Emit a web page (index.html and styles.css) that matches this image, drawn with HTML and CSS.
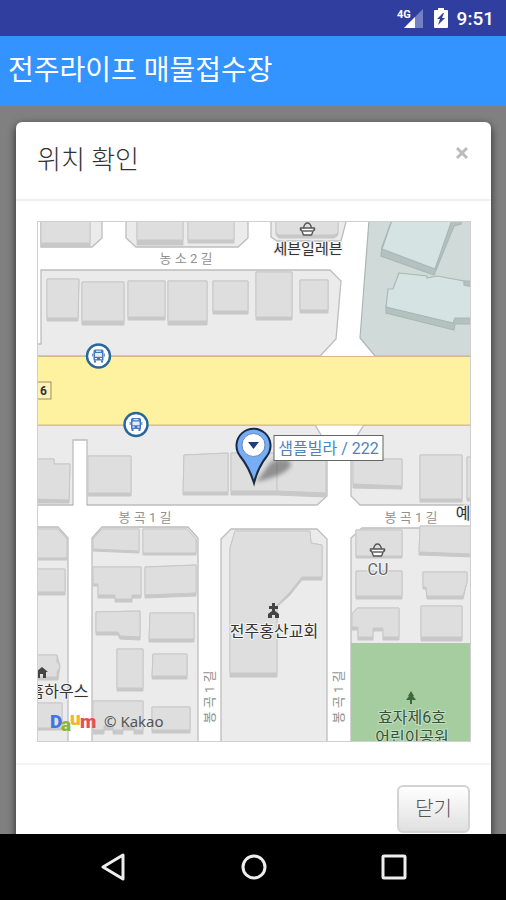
FILE: index.html
```html
<!DOCTYPE html>
<html lang="ko">
<head>
<meta charset="utf-8">
<meta name="viewport" content="width=device-width, initial-scale=1">
<title>전주라이프 매물접수장</title>
<link rel="stylesheet" href="styles.css">
</head>
<body>
<div class="status-bar">
  <svg class="signal" width="28" height="24" viewBox="0 0 28 24" aria-hidden="true">
    <path d="M26 3V22H7Z" fill="#7480c4"/>
    <path d="M18 11V22H7Z" fill="#fff"/>
    <text x="0" y="12" class="network">4G</text>
  </svg>
  <svg class="battery" width="16" height="24" viewBox="0 0 16 24" aria-hidden="true">
    <path d="M5 2H11V4H14Q15 4 15 5V21Q15 22 14 22H2Q1 22 1 21V5Q1 4 2 4H5Z" fill="#fff"/>
    <path d="M10 7 4 13H7L5 19L12 12H9L11 7Z" fill="#303f9f"/>
  </svg>
  <span class="clock">9:51</span>
</div>
<header class="app-bar"><h1>전주라이프 매물접수장</h1></header>
<main class="backdrop">
  <section class="modal" role="dialog" aria-labelledby="modal-title">
    <div class="modal-header">
      <h2 id="modal-title">위치 확인</h2>
      <button class="close" type="button" aria-label="닫기">
        <svg width="14" height="14" viewBox="0 0 14 14"><path d="M2 2 12 12M12 2 2 12"/></svg>
      </button>
    </div>
    <div class="modal-body">
      <svg class="map" viewBox="38 222 432 519" role="img" aria-label="지도">
        <defs>
          <g id="bus">
            <circle r="11.5" fill="#fff" stroke="#27699b" stroke-width="2.4"/>
            <path d="M-3.500-6.500H3.500Q5-6.500 5-5V4.500H-5V-5Q-5-6.500-3.500-6.500Z" fill="#4878b8"/>
            <path d="M-2.500-4.800H2.500" stroke="#fff" stroke-width="1"/>
            <path d="M-3.500-3H3.500V.8H-3.500Z" fill="#e4edf6"/>
            <path d="M-3.500 4.500V6.500M3.500 4.500V6.500" stroke="#4878b8" stroke-width="2"/>
            <path d="M-5.800-2.500V.5M5.800-2.500V.5" stroke="#4878b8" stroke-width="1"/>
            <path d="M-3.500 2.700H-1.500M1.500 2.700H3.500" stroke="#fff" stroke-width="1.2"/>
          </g>
          <g id="basket" fill="#fff" stroke="#555" stroke-width="1.4" stroke-linejoin="round">
            <path d="M-4-1Q-3-6 0-6T4-1" fill="none"/>
            <path d="M-7-1H7V1H6L4 6H-4L-6 1H-7Z"/>
            <path d="M-5 2H5" fill="none"/>
          </g>
          <filter id="soft" x="-30%" y="-30%" width="160%" height="160%"><feGaussianBlur stdDeviation="2"/></filter>
        </defs>
        <rect x="38" y="222" width="432" height="519" fill="#fff"/>

        <g class="block">
          <path d="M41 220H102V238L92 247H41Z"/>
          <path d="M126 220V238L136 247H238L248 238V220Z"/>
          <path d="M271 220V237L277 241H341L346 222V220Z"/>
          <path d="M41 270H330L341 281L336 339L320 356H36V344H41Z"/>
          <path d="M36 425H315L327 445V496L317 505H87V440H73V505H36Z"/>
          <path d="M364 425H472V505H360L351 496V445Z"/>
          <path d="M36 527H58L68 538V743H36Z"/>
          <path d="M92 743V538L102 527H188L198 538V743Z"/>
          <path d="M221 743V539L231 529H317L327 539V743Z"/>
          <path d="M351 743V538L362 528H465L472 534V743Z"/>
        </g>

        <g class="shade">
          <path d="M41 220H90V246H41Z"/><path d="M137 220H183V245H137Z"/><path d="M188 220H234V243H188Z"/><path d="M276 220H338V235L334 238H279L276 235Z"/>
          <path d="M47 279H79L78 321H47Z"/><path d="M82 282H124V325H82Z"/><path d="M128 281H165V320H128Z"/><path d="M168 281H207V325H168Z"/><path d="M213 281H248V314H213Z"/><path d="M256 272H292V320H256Z"/><path d="M300 280H328V313H300Z"/>
          <path d="M36 459H54V464H70L69 503H36Z"/><path d="M88 456H131V496H88Z"/><path d="M184 455 228 453V495H183Z"/><path d="M231 453H277V495H231Z"/><path d="M277 453H326V497L277 495Z"/>
          <path d="M353 459H402V489L353 488Z"/><path d="M420 455H462V502H420Z"/><path d="M467 457H472V501H467Z"/>
          <path d="M36 529H58L67 539V560H36Z"/><path d="M36 569H65V595H36Z"/><path d="M36 655H57L60 666L58 680H36Z"/><path d="M36 703H62V730H36Z"/>
          <path d="M93 539 102 529H139V553L93 551Z"/><path d="M143 529H187L196 539V555H143Z"/>
          <path d="M93 567H141V598H132V602H115V598H98V586H93Z"/><path d="M145 567 196 565V596L145 598Z"/>
          <path d="M96 612 140 611V640L120 639L118 635H96Z"/><path d="M150 613H194V642H149Z"/>
          <path d="M117 649H143V691H117Z"/><path d="M153 654H187V679H152Z"/>
          <path d="M93 701H143V734H134V730H123V734H113V730H104V734H93Z"/><path d="M152 707H190V733H152Z"/>
          <path d="M230 677V548L235 531H310L311 543L322 545V580H302L290 595L277 607V677Z"/>
          <path d="M356 530H402V558H356Z"/><path d="M420 526H472V557L419 555Z"/><path d="M356 571H402V599H356Z"/><path d="M423 572H467V582L463 599H427L426 589H423Z"/>
          <path d="M352 614 357 608H399V640H383V631H373V640H358V630H352Z"/><path d="M421 606H462V641H421Z"/>
        </g>
        <g class="building">
          <path d="M41 220H90V243H41Z"/><path d="M137 220H183V240H137Z"/><path d="M188 220H234V240H188Z"/><path d="M276 220H338V233L334 235H279L276 233Z"/>
          <path d="M47 279H79L78 318H47Z"/><path d="M82 282H124V321H82Z"/><path d="M128 281H165V317H128Z"/><path d="M168 281H207V321H168Z"/><path d="M213 281H248V311H213Z"/><path d="M256 272H292V317H256Z"/><path d="M300 280H328V310H300Z"/>
          <path d="M36 459H54V464H70L69 500L36 499Z"/><path d="M88 456H131V493H88Z"/><path d="M184 455 228 453V492H183Z"/><path d="M231 453H277V491H231Z"/><path d="M277 453H326V493L277 491Z"/>
          <path d="M353 459H402V486L353 484Z"/><path d="M420 455H462V499H420Z"/><path d="M467 457H472V498H467Z"/>
          <path d="M36 529H58L67 539V558H36Z"/><path d="M36 569H65V592H36Z"/><path d="M36 655H57V662L60 666L57 672V677H36Z"/><path d="M36 703H62V728H36Z"/>
          <path d="M93 539 102 529H139V551L93 549Z"/><path d="M143 529H187L196 539V553H143Z"/>
          <path d="M93 567H141V595H132V599H115V595H98V584H93Z"/><path d="M145 567 196 565V593L145 595Z"/>
          <path d="M96 612 140 611V637L120 636L118 632H96Z"/><path d="M150 613H194V639H149Z"/>
          <path d="M117 649H143V688H117Z"/><path d="M153 654H187V676H152Z"/>
          <path d="M93 701H143V730H134V726H123V730H113V726H104V730H93Z"/><path d="M152 707H190V730H152Z"/>
          <path d="M230 673V548L235 531H310L311 543L322 545V577H302L290 592L277 605V673Z"/>
          <path d="M356 530H402V556H356Z"/><path d="M420 526H472V554L419 552Z"/><path d="M356 571H402V596H356Z"/><path d="M423 572H467V582L463 596H427L426 587H423Z"/>
          <path d="M352 614 357 608H399V637H383V628H373V637H358V627H352Z"/><path d="M421 606H462V637H421Z"/>
        </g>

        <g stroke="#a9b8b5" stroke-width="1.2">
          <path d="M369 220H472V356H375L360 338Z" fill="#d0dad8"/>
          <path d="M382 247 381 256 434 275 454 226 461 224V220H392Z" fill="#b3c2bf"/>
          <path d="M392 220H452L435 269L382 249Z" fill="#d5e3e2"/>
          <path d="M386 307V313L454 330L455 324H472V281H399Z" fill="#b3c2bf"/>
          <path d="M399 273 427 276V278L437 276L464 281V285L472 287V318H455L453 323L386 307L388 289H393Z" fill="#d5e3e2"/>
        </g>
        <path d="M36 356.500H472V425H36Z" fill="#fef2a0" stroke="#d9b885" stroke-width="1"/>
        <path d="M351 643H472V743H351Z" fill="#a5cd9f"/>

        <rect x="30" y="382" width="21" height="17" fill="#fbf1b9" stroke="#99905d"/>
        <text class="road-number" x="40" y="395">6</text>
        <use href="#bus" x="98.500" y="356"/>
        <use href="#bus" x="136" y="424.500"/>

        <g class="road" text-anchor="middle">
          <text x="186" y="263">농 소 2 길</text>
          <text x="145" y="522">봉 곡 1 길</text>
          <text x="411" y="522">봉 곡 1 길</text>
          <text transform="translate(214 697) rotate(-90)">봉 곡 1 길</text>
          <text transform="translate(343 697) rotate(-90)">봉 곡 1 길</text>
        </g>

        <use href="#basket" x="307.500" y="229"/>
        <use href="#basket" x="377.500" y="550"/>
        <g fill="#444">
          <path d="M272 603H275V606H278V609H275V611L279 614V618H275V615H272V618H268V614L272 611V609H269V606H272Z"/>
          <path d="M411 691 414 696H413L416 700H412V704H410V700H406L409 696H408Z" fill="#3c6940"/>
          <path d="M36 672 42 667 48 672H46V678H43V674H40V678H36Z"/>
        </g>
        <g class="place" text-anchor="middle">
          <text x="308" y="254" class="shop">세븐일레븐</text>
          <text x="274" y="637">전주홍산교회</text>
          <text x="378" y="575" class="store">CU</text>
          <text x="412" y="723" class="park">효자제6호</text>
          <text x="412" y="743" class="park">어린이공원</text>
          <text x="463" y="519">예</text>
          <text x="59" y="697">홈하우스</text>
        </g>

        <path d="M256 482 271 462Q290 455 291 465Q287 475 256 482Z" fill="#333" opacity=".45" filter="url(#soft)"/>
        <path d="M254 483Q249 467 240 456A17 17 0 1 1 267 456Q258 467 254 483Z" fill="#77adf5" stroke="#182b44" stroke-width="2"/>
        <circle cx="253.500" cy="445" r="11.500" fill="#fff" stroke="#6686b9"/>
        <path d="M248 442H259L253.500 449Z" fill="#1e3f7c"/>
        <rect x="274" y="435.500" width="109" height="25" fill="#fff" stroke="#666"/>
        <text class="label" x="328.500" y="454" text-anchor="middle">샘플빌라 / 222</text>

        <g class="daum">
          <text x="50" y="728" fill="#4372e4">D</text>
          <text x="61" y="731" fill="#8cb82b">a</text>
          <text x="70" y="725" fill="#f4b51e">u</text>
          <text x="80" y="728" fill="#e94e50">m</text>
        </g>
        <text class="copyright" x="104" y="727">© Kakao</text>
      </svg>
    </div>
    <div class="modal-footer"><button class="dismiss" type="button">닫기</button></div>
  </section>
</main>
<nav class="nav-bar">
  <button type="button" aria-label="뒤로"><svg width="28" height="28" viewBox="0 0 28 28"><path d="M23 2V26L3 14Z"/></svg></button>
  <button type="button" aria-label="홈"><svg width="28" height="28" viewBox="0 0 28 28"><circle cx="14" cy="14" r="11"/></svg></button>
  <button type="button" aria-label="최근 앱"><svg width="28" height="28" viewBox="0 0 28 28"><rect x="3" y="3" width="22" height="22" rx="1"/></svg></button>
</nav>
</body>
</html>
```
FILE: styles.css
```css
* { box-sizing: border-box; }

body {
  margin: 0;
  height: 100vh;
  display: flex;
  flex-direction: column;
  overflow: hidden;
  font-family: Roboto, "Noto Sans CJK KR", sans-serif;
  color: #333;
}

h1, h2 { margin: 0; }

button { font: inherit; cursor: pointer; }

.status-bar {
  flex: none;
  height: 36px;
  padding: 0 12px;
  display: flex;
  align-items: center;
  justify-content: flex-end;
  background: #303f9f;
  color: #fff;
}

.signal { margin-right: 8px; }
.battery { margin-right: 8px; }
.network { font: 700 11px Roboto, sans-serif; fill: #fff; }
.clock { font-size: 19px; font-weight: 500; }

.app-bar {
  flex: none;
  height: 70px;
  padding: 0 8px;
  display: flex;
  align-items: center;
  background: #3393ff;
  color: #fff;
}

.app-bar h1 { font-size: 28px; font-weight: 400; line-height: 40px; }

.backdrop {
  flex: 1;
  min-height: 0;
  overflow: hidden;
  padding: 16px 15px 0 16px;
  background: #808080;
}

.modal {
  background: #fff;
  border-radius: 6px;
  box-shadow: 0 3px 9px rgba(0, 0, 0, .7);
}

.modal-header {
  display: flex;
  align-items: flex-start;
  justify-content: space-between;
  padding: 20px 21px;
  border-bottom: 2px solid #f0f0f0;
}

.modal-header h2 { font-size: 26px; font-weight: 300; line-height: 37px; }

.close {
  display: flex;
  margin-top: 3px;
  padding: 1px;
  border: 0;
  background: none;
}

.close path { stroke: #bcbcbc; stroke-width: 3; }

.modal-body { padding: 20px 20px 21px 21px; }

.map {
  display: block;
  width: 100%;
  height: auto;
  border: 1px solid #d0d0d0;
}

.block { fill: #ebebeb; stroke: #bdbdbd; stroke-width: 1.3; }
.shade { fill: #c8c8c8; stroke: #c8c8c8; }
.building { fill: #dedede; stroke: #c8c8c8; }

.map text { font-family: Roboto, "Noto Sans CJK KR", sans-serif; }
.road { font-size: 13px; fill: #909090; }
.road text { stroke: #fff; stroke-width: 2px; paint-order: stroke; }
.road-number { font-size: 12px; font-weight: 700; fill: #333; }
.place { font-size: 16px; fill: #333; }
.place text { stroke: #f4f4f4; stroke-width: 2px; paint-order: stroke; }
.place .shop { font-size: 15px; }
.place .store { fill: #666; }
.place .park { fill: #34533a; stroke: #c5dfc1; }
.label { font-size: 16px; fill: #4f82bd; }
.daum { font-size: 19px; font-weight: 900; }
.map .copyright { font-family: "Noto Sans", sans-serif; font-size: 15px; fill: #555; }

.modal-footer {
  display: flex;
  justify-content: flex-end;
  padding: 20px 21px;
  border-top: 2px solid #f3f3f3;
}

.dismiss {
  padding: 8px 16px;
  border: 2px solid #d3d3d3;
  border-radius: 6px;
  background: linear-gradient(#fff, #e0e0e0);
  color: #555;
  font-size: 20px;
  font-weight: 300;
  line-height: 28px;
}

.nav-bar {
  flex: none;
  height: 66px;
  padding: 0 42px 0 44px;
  display: flex;
  align-items: center;
  background: #000;
}

.nav-bar button {
  flex: 1;
  display: flex;
  justify-content: center;
  padding: 0;
  border: 0;
  background: none;
}

.nav-bar svg { fill: none; stroke: #eee; stroke-width: 3; stroke-linejoin: round; }
```
